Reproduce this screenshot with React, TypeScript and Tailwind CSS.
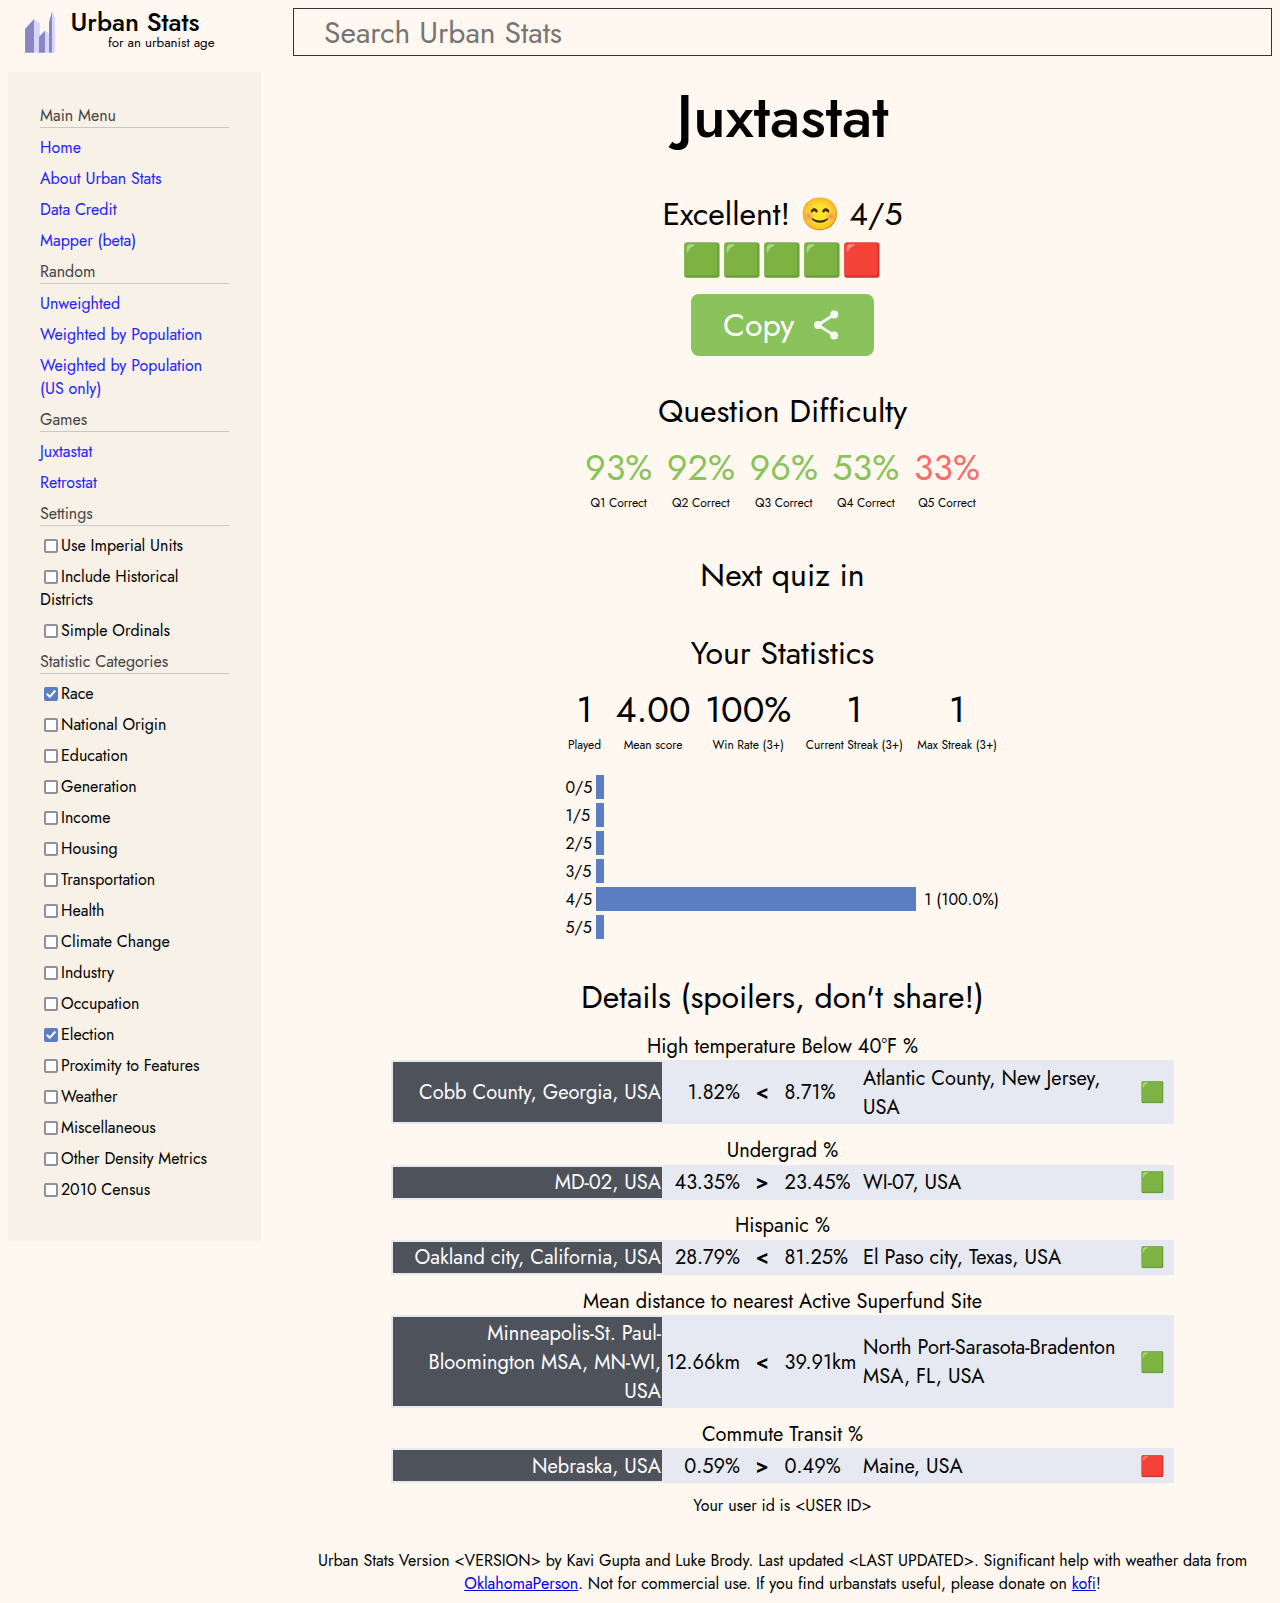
type MenuSection = { title: string; links?: string[]; checks?: [string, boolean][] };

const menu: MenuSection[] = [
  { title: 'Main Menu', links: ['Home', 'About Urban Stats', 'Data Credit', 'Mapper (beta)'] },
  { title: 'Random', links: ['Unweighted', 'Weighted by Population', 'Weighted by Population (US only)'] },
  { title: 'Games', links: ['Juxtastat', 'Retrostat'] },
  {
    title: 'Settings',
    checks: [
      ['Use Imperial Units', false],
      ['Include Historical Districts', false],
      ['Simple Ordinals', false],
    ],
  },
  {
    title: 'Statistic Categories',
    checks: [
      ['Race', true],
      ['National Origin', false],
      ['Education', false],
      ['Generation', false],
      ['Income', false],
      ['Housing', false],
      ['Transportation', false],
      ['Health', false],
      ['Climate Change', false],
      ['Industry', false],
      ['Occupation', false],
      ['Election', true],
      ['Proximity to Features', false],
      ['Weather', false],
      ['Miscellaneous', false],
      ['Other Density Metrics', false],
      ['2010 Census', false],
    ],
  },
];

type Stat = { value: string; label: string; color: string };

const difficulty: Stat[] = [
  { value: '93%', label: 'Q1 Correct', color: 'text-[#8ac35c]' },
  { value: '92%', label: 'Q2 Correct', color: 'text-[#8ac35c]' },
  { value: '96%', label: 'Q3 Correct', color: 'text-[#8ac35c]' },
  { value: '53%', label: 'Q4 Correct', color: 'text-[#8ac35c]' },
  { value: '33%', label: 'Q5 Correct', color: 'text-[#f96d6d]' },
];

const statistics: Stat[] = [
  { value: '1', label: 'Played', color: 'text-black' },
  { value: '4.00', label: 'Mean score', color: 'text-black' },
  { value: '100%', label: 'Win Rate (3+)', color: 'text-black' },
  { value: '1', label: 'Current Streak (3+)', color: 'text-black' },
  { value: '1', label: 'Max Streak (3+)', color: 'text-black' },
];

const histogram = [0, 0, 0, 0, 1, 0];

const details = [
  {
    title: 'High temperature Below 40°F %',
    left: 'Cobb County, Georgia, USA',
    a: '1.82%',
    op: '<',
    b: '8.71%',
    right: 'Atlantic County, New Jersey, USA',
    ok: true,
    size: 'h-[64px] mb-3',
    titleLine: 'leading-[31px]',
    cellPad: '',
    rightPad: 'pt-[2px]',
  },
  {
    title: 'Undergrad %',
    left: 'MD-02, USA',
    a: '43.35%',
    op: '>',
    b: '23.45%',
    right: 'WI-07, USA',
    ok: true,
    size: 'h-[35px] mb-[11px]',
    titleLine: 'leading-[29px]',
    cellPad: '',
    rightPad: '',
  },
  {
    title: 'Hispanic %',
    left: 'Oakland city, California, USA',
    a: '28.79%',
    op: '<',
    b: '81.25%',
    right: 'El Paso city, Texas, USA',
    ok: true,
    size: 'h-[35px] mb-[11px]',
    titleLine: 'leading-[29px]',
    cellPad: '',
    rightPad: '',
  },
  {
    title: 'Mean distance to nearest Active Superfund Site',
    left: 'Minneapolis-St. Paul-Bloomington MSA, MN-WI, USA',
    a: '12.66km',
    op: '<',
    b: '39.91km',
    right: 'North Port-Sarasota-Bradenton MSA, FL, USA',
    ok: true,
    size: 'h-[93px] mb-[11px]',
    titleLine: 'leading-[31px]',
    cellPad: 'pt-[2px]',
    rightPad: '',
  },
  {
    title: 'Commute Transit %',
    left: 'Nebraska, USA',
    a: '0.59%',
    op: '>',
    b: '0.49%',
    right: 'Maine, USA',
    ok: false,
    size: 'h-[35px] mb-[11px]',
    titleLine: 'leading-[31px]',
    cellPad: 'pt-[2px]',
    rightPad: 'pt-[2px]',
  },
];

function Logo() {
  return (
    <svg className="mt-[3px] ml-4 h-[42px] w-8" viewBox="0 0 32 42">
      <path fill="#d6d5fb" d="m10 8 6 4.500v29.200h-6z" />
      <path fill="#8987c1" d="M1 18 10 8v33.700H1z" />
      <path fill="#8987c1" d="m15 26 6-6.500v22.200h-6z" />
      <path fill="#d6d5fb" d="m21 19.500 4 3.500v18.700h-4z" />
      <path fill="#8987c1" d="M25 10.500 28.300 0v41.700H25z" />
      <path fill="#d6d5fb" d="M28.300 0 31 7v34.700h-2.700z" />
    </svg>
  );
}

function Checkbox({ checked }: { checked: boolean }) {
  return checked ? (
    <span className="mr-[3px] ml-1 inline-flex h-[14px] w-[14px] rounded-[2px] bg-[#5a7dc3] align-[-2px]">
      <svg className="h-[14px] w-[14px]" viewBox="0 0 14 14" fill="none" stroke="#fff" strokeWidth="2">
        <path d="m2.800 6.800 3 3 5.500-6.300" />
      </svg>
    </span>
  ) : (
    <span className="mr-[3px] ml-1 inline-block h-[14px] w-[14px] rounded-[2px] border-2 border-[#8f8f9d] bg-white align-[-2px]" />
  );
}

function Sidebar() {
  return (
    <nav className="mt-4 h-[1169px] w-[253px] bg-[#f7f1e8] p-8 text-base leading-[23px]">
      {menu.map((section) => (
        <div key={section.title}>
          <div className="mb-2 h-6 border-b border-[#c8c8c8] text-[#444]">{section.title}</div>
          {section.links?.map((text) => (
            <a key={text} className="mb-2 block text-[#2222ff]">
              {text}
            </a>
          ))}
          {section.checks?.map(([text, checked]) => (
            <label key={text} className="mb-2 block">
              <Checkbox checked={checked} />
              {text}
            </label>
          ))}
        </div>
      ))}
    </nav>
  );
}

function StatRow({ stats }: { stats: Stat[] }) {
  return (
    <div className="mt-[7px] flex gap-[14.4px] text-center whitespace-nowrap">
      {stats.map((s) => (
        <div key={s.label}>
          <div className={`text-4xl leading-[52px] ${s.color}`}>{s.value}</div>
          <div className="mt-[2px] text-xs leading-[17px]">{s.label}</div>
        </div>
      ))}
    </div>
  );
}

function Quiz() {
  return (
    <main className="flex flex-col items-center">
      <h1 className="mt-[17px] text-[60px] leading-[87px] font-medium">Juxtastat</h1>
      <div className="mt-[31px] h-[46px] text-[32px] leading-[46px] whitespace-nowrap">Excellent! 😊 4/5</div>
      <div className="h-[46px] pr-[2px] text-[32px] leading-[46px] whitespace-nowrap">🟩🟩🟩🟩🟥</div>
      <button className="mt-[11px] flex h-[62px] w-[183px] items-center justify-between rounded-lg bg-[#8ac35c] px-8 text-[32px] leading-[46px] text-white">
        Copy
        <svg className="h-8 w-8" viewBox="0 0 32 32" fill="#f8f8f8">
          <path d="M24.200 5.500 8 16l16.200 10.400" fill="none" stroke="#f8f8f8" strokeWidth="2.800" />
          <circle cx="24.200" cy="5.500" r="4" />
          <circle cx="8" cy="16" r="4" />
          <circle cx="24.200" cy="26.400" r="4" />
        </svg>
      </button>

      <h2 className="mt-8 text-[32px] leading-[46px]">Question Difficulty</h2>
      <StatRow stats={difficulty} />
      <h2 className="mt-10 text-[32px] leading-[46px]">Next quiz in</h2>
      <h2 className="mt-8 text-[32px] leading-[46px]">Your Statistics</h2>
      <StatRow stats={statistics} />

      <div className="mt-[21px] w-[433px] text-base leading-[26px] whitespace-nowrap">
        {histogram.map((count, i) => (
          <div key={i} className="mb-1 flex h-6">
            <div className="-ml-[0.5px] w-[30.5px]">{i}/5</div>
            <div className={count ? 'w-[320px] bg-[#5a7dc3]' : 'w-2 bg-[#5a7dc3]'} />
            {count > 0 && <div className="ml-[8.5px]">1 (100.0%)</div>}
          </div>
        ))}
      </div>

      <h2 className="mt-[31px] text-[32px] leading-[46px]">Details (spoilers, don't share!)</h2>
      <div className="mt-[11px] w-[783px] text-xl leading-[29px]">
        {details.map((d) => (
          <section key={d.title}>
            <h3 className={`h-[29px] text-center ${d.titleLine}`}>{d.title}</h3>
            <div className={`flex items-center bg-[#e6e9f1] p-[2px] ${d.size}`}>
              <div
                className={`flex w-[269px] items-center justify-end self-stretch bg-[#4e525b] pr-px pl-4 text-right text-white ${d.cellPad}`}
              >
                {d.left}
              </div>
              <div className={`w-[78px] text-right ${d.cellPad}`}>{d.a}</div>
              <div className={`w-[44.5px] text-center font-semibold ${d.cellPad}`}>{d.op}</div>
              <div className={`w-[78.5px] ${d.cellPad}`}>{d.b}</div>
              <div className={`w-[270px] ${d.rightPad}`}>{d.right}</div>
              <div className={`ml-[7px] w-[25px] ${d.cellPad}`}>{d.ok ? '🟩' : '🟥'}</div>
            </div>
          </section>
        ))}
      </div>
      <p className="text-base leading-[23px]">{'Your user id is <USER ID>'}</p>
    </main>
  );
}

function Footer() {
  return (
    <footer className="mt-8 px-4 text-center text-base leading-[23px]">
      {'Urban Stats Version <VERSION> by Kavi Gupta and Luke Brody. Last updated <LAST UPDATED>. Significant help with weather data from '}
      <a className="text-[#0000ee] underline">OklahomaPerson</a>. Not for commercial use. If you find urbanstats
      useful, please donate on <a className="text-[#0000ee] underline">kofi</a>!
    </footer>
  );
}

export default function App() {
  return (
    <div className="flex h-[1603px] w-[1280px] overflow-hidden bg-[#fff8f0] p-2 font-[Jost,Lato,sans-serif] text-black">
      <div className="w-[253px] shrink-0">
        <header className="flex h-12">
          <Logo />
          <div className="ml-[14.5px] w-[144px] whitespace-nowrap">
            <div className="mt-[2px] h-6 text-[25.7px] leading-[26px] font-medium">Urban Stats</div>
            <div className="text-right text-[13.33px] leading-[17px]">for an urbanist age</div>
          </div>
        </header>
        <Sidebar />
      </div>
      <div className="ml-8 w-[979px]">
        <div className="flex h-12 items-center border border-[#333] pl-[30px] text-[30px] text-[#757575]">
          Search Urban Stats
        </div>
        <Quiz />
        <Footer />
      </div>
    </div>
  );
}
